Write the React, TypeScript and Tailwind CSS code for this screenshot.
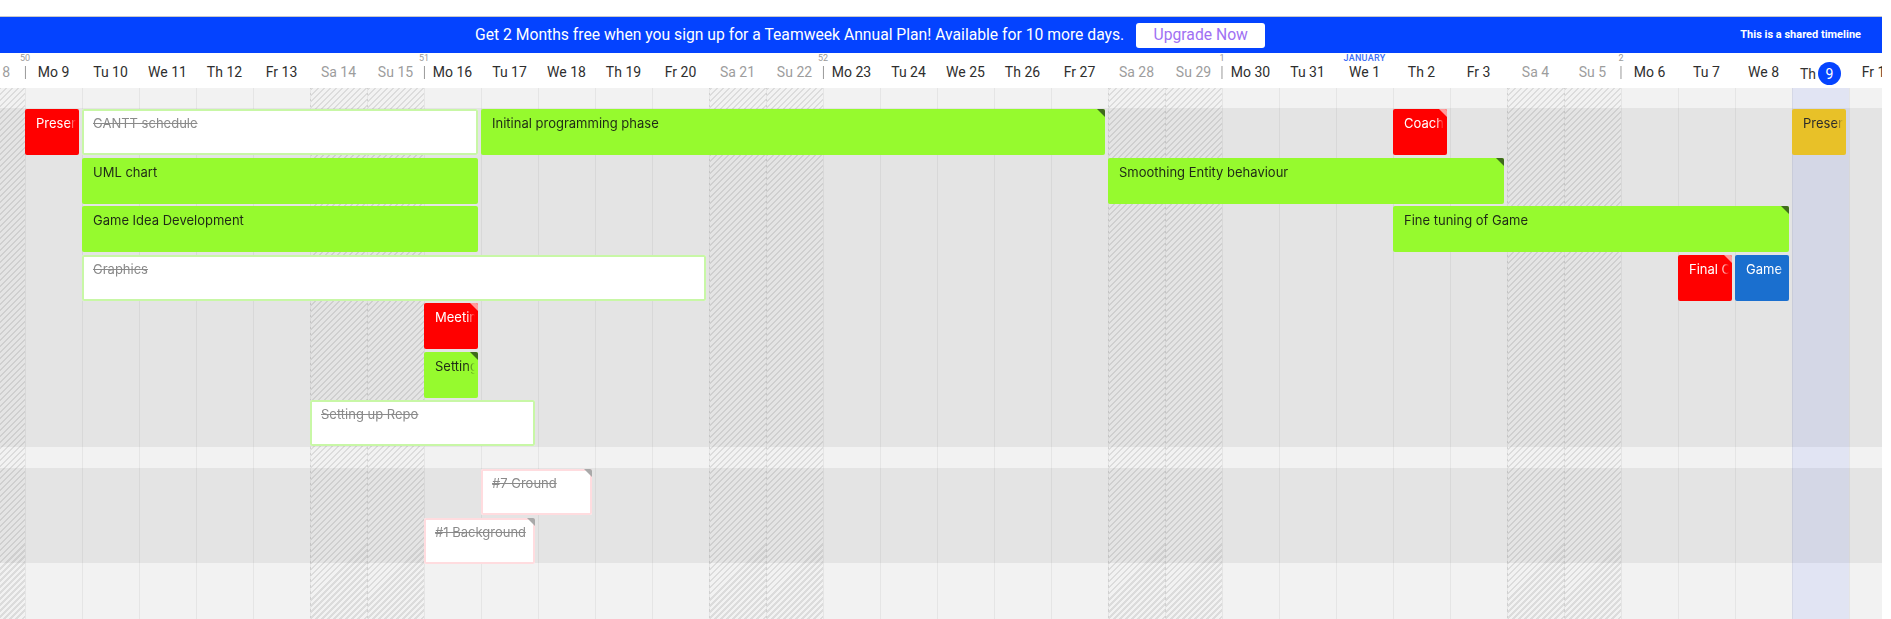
import React from "react";

type Kind = "green" | "red" | "yellow" | "blue" | "doneGreen" | "donePink";

type Task = {
  label: string;
  start: number;
  span: number;
  group: 0 | 1;
  row: number;
  kind: Kind;
  corner?: "dark" | "light" | "grey";
};

const DAY = 57;
const ORIGIN = 25; // x of "Mo 9"
const GROUP_TOP = [20, 380];
const ROW = 48.5;

const NAMES = ["Mo", "Tu", "We", "Th", "Fr", "Sa", "Su"];
const WEEKS: Record<number, string> = { 0: "50", 7: "51", 14: "52", 21: "1", 28: "2" };

const days = Array.from({ length: 34 }, (_, k) => {
  const i = k - 1;
  const dom = 9 + i;
  return {
    i,
    name: NAMES[(i + 7) % 7],
    num: dom > 31 ? dom - 31 : dom,
    weekend: (i + 7) % 7 >= 5,
    today: i === 31,
  };
});

const tasks: Task[] = [
  { label: "Presentation", start: 0, span: 1, group: 0, row: 0, kind: "red" },
  { label: "GANTT schedule", start: 1, span: 7, group: 0, row: 0, kind: "doneGreen" },
  { label: "Initinal programming phase", start: 8, span: 11, group: 0, row: 0, kind: "green", corner: "dark" },
  { label: "Coaching", start: 24, span: 1, group: 0, row: 0, kind: "red", corner: "light" },
  { label: "Presentation", start: 31, span: 1, group: 0, row: 0, kind: "yellow" },
  { label: "UML chart", start: 1, span: 7, group: 0, row: 1, kind: "green" },
  { label: "Smoothing Entity behaviour", start: 19, span: 7, group: 0, row: 1, kind: "green", corner: "dark" },
  { label: "Game Idea Development", start: 1, span: 7, group: 0, row: 2, kind: "green" },
  { label: "Fine tuning of Game", start: 24, span: 7, group: 0, row: 2, kind: "green", corner: "dark" },
  { label: "Graphics", start: 1, span: 11, group: 0, row: 3, kind: "doneGreen" },
  { label: "Final Check", start: 29, span: 1, group: 0, row: 3, kind: "red", corner: "light" },
  { label: "Game Release", start: 30, span: 1, group: 0, row: 3, kind: "blue" },
  { label: "Meeting", start: 7, span: 1, group: 0, row: 4, kind: "red", corner: "light" },
  { label: "Setting", start: 7, span: 1, group: 0, row: 5, kind: "green", corner: "dark" },
  { label: "Setting up Repo", start: 5, span: 4, group: 0, row: 6, kind: "doneGreen" },
  { label: "#7 Ground", start: 8, span: 2, group: 1, row: 0, kind: "donePink", corner: "grey" },
  { label: "#1 Background", start: 7, span: 2, group: 1, row: 1, kind: "donePink", corner: "grey" },
];

const kindClass: Record<Kind, string> = {
  green: "bg-[#96fa2e] text-[#1f2a16]",
  red: "bg-[#ff0000] text-white",
  yellow: "bg-[#e8c128] text-[#2b2b2b]",
  blue: "bg-[#1a6fcf] text-white",
  doneGreen: "bg-white text-[#8a8a8a] line-through shadow-[inset_0_0_0_2px_#c8f7a6]",
  donePink: "bg-white text-[#8a8a8a] line-through shadow-[inset_0_0_0_2px_#ffdcdf]",
};

const cornerClass = {
  dark: "bg-[#3f6a1c]",
  light: "bg-[#ff9c9c]",
  grey: "bg-[#a9a9a9]",
};

const HeaderCell = ({ d }: { d: (typeof days)[number] }) => (
  <div className="relative h-[35px] w-[57px] shrink-0 pt-[9px] text-center text-[14px] leading-[20px]">
    {WEEKS[d.i] && (
      <div className="absolute left-0 top-[1px] flex -translate-x-1/2 flex-col items-center">
        <span className="text-[9px] leading-[9px] text-[#9a9a9a]">{WEEKS[d.i]}</span>
        <span className="mt-[3px] h-[13px] w-px bg-[#9a9a9a]" />
      </div>
    )}
    {d.i === 23 && (
      <span className="absolute left-0 right-0 top-[1px] text-[9px] leading-[9px] font-medium tracking-[0.3px] text-[#3b6df5]">
        JANUARY
      </span>
    )}
    {d.today ? (
      <span className="inline-flex items-center gap-[2px] text-[#333]">
        Th
        <span className="inline-flex h-[23px] w-[23px] items-center justify-center rounded-full bg-[#0443ff] text-white">
          9
        </span>
      </span>
    ) : (
      <span className={d.weekend ? "text-[#9d9d9d]" : "text-[#2e2e2e]"}>
        {d.name} {d.num}
      </span>
    )}
  </div>
);

const TaskBar = ({ t }: { t: Task }) => (
  <div
    className={`absolute z-10 overflow-hidden rounded-[2px] pl-[11px] pr-[3px] pt-[5px] text-[13px] leading-[18px] ${kindClass[t.kind]}`}
    style={{
      left: ORIGIN + t.start * DAY,
      top: Math.round(GROUP_TOP[t.group] + 1 + t.row * ROW),
      width: t.span * DAY - 3,
      height: 46,
    }}
  >
    <div className="overflow-hidden whitespace-nowrap [mask-image:linear-gradient(to_left,transparent,black_8px)]">
      {t.label}
    </div>
    {t.corner && (
      <div className={`absolute right-0 top-0 h-[8px] w-[8px] [clip-path:polygon(0_0,100%_0,100%_100%)] ${cornerClass[t.corner]}`} />
    )}
  </div>
);

const App: React.FC = () => {
  return (
    <div className="flex h-[619px] w-[1891px] overflow-hidden bg-white font-['Roboto',sans-serif]">
      <div className="flex w-[1882px] shrink-0 flex-col overflow-hidden">
        <div className="h-[17px] shrink-0 border-b border-[#c9c9c9]" />

        <div className="flex h-[36px] shrink-0 items-center bg-[#0443ff] text-white">
          <div className="flex flex-1 items-center justify-center gap-[12px]">
            <span className="text-[15.7px]">
              Get 2 Months free when you sign up for a Teamweek Annual Plan! Available for 10 more days.
            </span>
            <button className="h-[25px] w-[129px] rounded-[3px] bg-white text-[15.7px] text-[#a071f3]">
              Upgrade Now
            </button>
          </div>
          <span className="pr-[21px] text-[11px] font-bold">This is a shared timeline</span>
        </div>

        <div className="ml-[-32px] flex h-[35px] shrink-0 overflow-hidden bg-white">
          {days.map((d) => (
            <HeaderCell key={d.i} d={d} />
          ))}
        </div>

        <div className="relative flex-1 overflow-hidden">
          <div className="flex h-full flex-col">
            <div className="h-[20px] bg-[#f2f2f2]" />
            <div className="h-[339px] bg-[#e4e4e4]" />
            <div className="h-[21px] bg-[#f2f2f2]" />
            <div className="h-[95px] bg-[#e4e4e4]" />
            <div className="flex-1 bg-[#f2f2f2]" />
          </div>

          <div className="absolute inset-y-0 left-[-32px] flex">
            {days.map((d) => (
              <div
                key={d.i}
                className={`h-full w-[57px] shrink-0 border-l border-black/[0.05] ${
                  d.weekend
                    ? "bg-[image:repeating-linear-gradient(135deg,rgba(0,0,0,0.09)_0px,rgba(0,0,0,0.09)_1.5px,transparent_1.5px,transparent_4.25px)]"
                    : ""
                } ${d.today ? "bg-[#4d6bff]/10" : ""}`}
              />
            ))}
          </div>

          <div className="absolute inset-0 font-['Inter',sans-serif]">
            {tasks.map((t, k) => (
              <TaskBar key={k} t={t} />
            ))}
          </div>
        </div>
      </div>
      <div className="flex-1 bg-white" />
    </div>
  );
};

export default App;
